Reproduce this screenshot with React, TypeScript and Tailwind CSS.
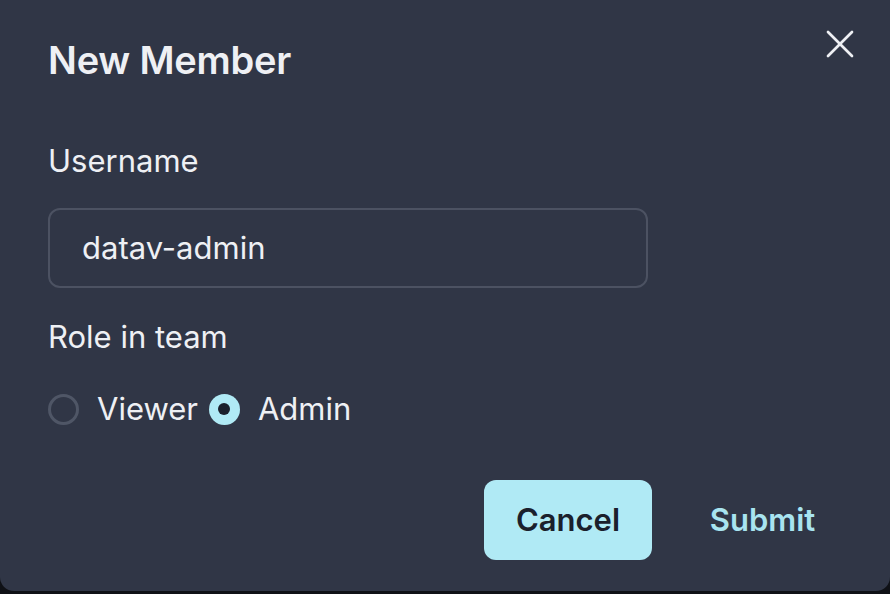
import { X } from "lucide-react";

function Radio({ label, checked }: { label: string; checked?: boolean }) {
  return (
    <label className="flex items-center gap-[18px]">
      {checked ? (
        <span className="flex h-[31px] w-[31px] items-center justify-center rounded-full bg-[#b0eaf5]">
          <span className="h-[12px] w-[12px] rounded-full bg-[#1a202c]" />
        </span>
      ) : (
        <span className="h-[31px] w-[31px] rounded-full border-[3px] border-[#4f5666]" />
      )}
      <span>{label}</span>
    </label>
  );
}

export default function App() {
  return (
    <div className="h-[594px] w-[890px] bg-[#0f1116]">
      <div
        className="relative flex h-[591px] w-full flex-col rounded-b-[14px] bg-[#303646] text-[#eef0f4]"
        style={{ fontFamily: "Inter, 'Noto Sans', sans-serif" }}
      >
        <h2 className="px-12 pt-[30px] text-[38px] font-semibold leading-[60px] tracking-[-0.2px]">
          New Member
        </h2>
        <button className="absolute right-[26px] top-[20px] text-[#eef0f4]">
          <X size={48} strokeWidth={1.35} />
        </button>

        <div className="flex flex-col px-12">
          <label className="mt-[47px] text-[31px] leading-[48px]">Username</label>
          <div className="mt-[23px] flex h-[80px] w-[600px] items-center rounded-[12px] border-2 border-[#4c5262] px-[32px] text-[31px]">
            datav-admin
          </div>
          <label className="mt-[25px] text-[31px] leading-[48px]">Role in team</label>
          <div className="mt-[24px] flex h-[48px] items-center gap-[11px] text-[31px]">
            <Radio label="Viewer" />
            <Radio label="Admin" checked />
          </div>
        </div>

        <div className="mt-[47px] flex justify-end pr-[42px]">
          <button className="h-[80px] w-[168px] rounded-[12px] bg-[#b0eaf5] text-[31px] font-semibold text-[#1a202c]">
            Cancel
          </button>
          <button className="ml-[25px] h-[80px] w-[171px] rounded-[12px] text-[31px] font-semibold text-[#a8e4f0]">
            Submit
          </button>
        </div>
      </div>
    </div>
  );
}
